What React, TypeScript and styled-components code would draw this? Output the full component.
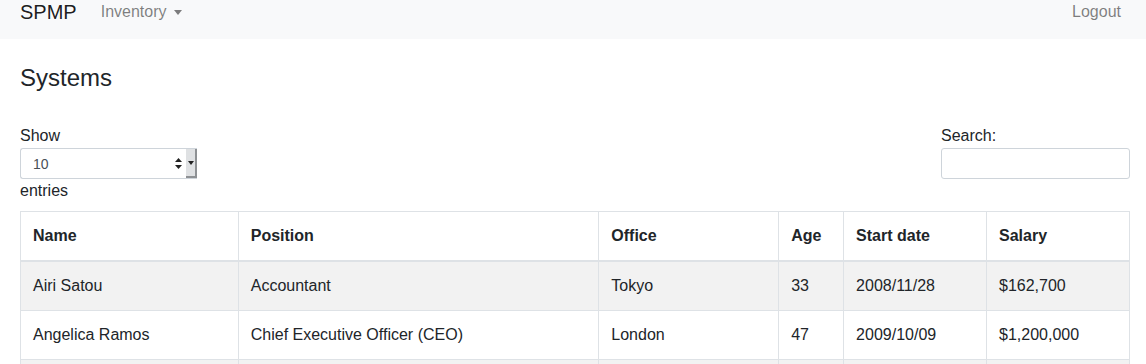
import styled, { createGlobalStyle } from "styled-components";

const GlobalStyle = createGlobalStyle`
  * { box-sizing: border-box; }
  body {
    margin: 0;
    font-family: "Liberation Sans", Arial, sans-serif;
    font-size: 16px;
    line-height: 24px;
    color: #212529;
    background: #fff;
  }
`;

const Navbar = styled.nav`
  height: 39px;
  background: #f8f9fa;
  display: flex;
  align-items: flex-start;
  padding: 0 25px 0 20px;
`;

const Brand = styled.div`
  font-size: 20px;
  line-height: 24px;
  color: rgba(0, 0, 0, 0.9);
  margin-right: 24px;
`;

const NavLink = styled.div<{ $right?: boolean }>`
  font-size: 16px;
  line-height: 24px;
  color: rgba(0, 0, 0, 0.5);
  display: flex;
  align-items: center;
  margin-left: ${(p) => (p.$right ? "auto" : "0")};
`;

const Caret = styled.span`
  display: inline-block;
  margin-left: 7px;
  margin-top: 1px;
  border-top: 5px solid rgba(0, 0, 0, 0.5);
  border-left: 4px solid transparent;
  border-right: 4px solid transparent;
`;

const Main = styled.main`
  padding: 0 16px 0 20px;
`;

const Title = styled.h4`
  margin: 24px 0 0;
  font-size: 24px;
  font-weight: 400;
  line-height: 29px;
`;

const Controls = styled.div`
  display: flex;
  justify-content: space-between;
  margin-top: 32px;
`;

const Field = styled.div`
  display: flex;
  flex-direction: column;
`;

const Label = styled.div`
  line-height: 24px;
`;

const SelectBox = styled.div`
  width: 177px;
  height: 31px;
  border: 1px solid #ced4da;
  border-right: none;
  border-radius: 3px 0 0 3px;
  display: flex;
  align-items: center;
  font-size: 14px;
  padding-left: 12px;
`;

const SelectValue = styled.span`
  flex: 1;
  color: #495057;
`;

const Spinner = styled.svg`
  margin-right: 4px;
`;

const DropButton = styled.div`
  width: 11px;
  align-self: stretch;
  background: #dfe1e3;
  border-right: 2px solid #8e9194;
  border-bottom: 2px solid #8e9194;
  display: flex;
  align-items: center;
  justify-content: center;
`;

const DropCaret = styled.span`
  border-top: 4px solid #222;
  border-left: 3px solid transparent;
  border-right: 3px solid transparent;
`;

const SearchInput = styled.div`
  width: 189px;
  height: 31px;
  border: 1px solid #ced4da;
  border-radius: 3px;
`;

const Table = styled.table`
  width: 1110px;
  margin-top: 8px;
  border-collapse: collapse;
  font-size: 16px;
`;

const Th = styled.th<{ $w: number }>`
  width: ${(p) => p.$w}px;
  text-align: left;
  font-weight: 700;
  padding: 12px;
  height: 49px;
  border: 1px solid #dee2e6;
  border-bottom: 2px solid #dee2e6;
`;

const Row = styled.tr<{ $striped?: boolean }>`
  background: ${(p) => (p.$striped ? "#f2f2f2" : "#fff")};
`;

const Td = styled.td`
  padding: 12px;
  height: 48px;
  border: 1px solid #dee2e6;
`;

const columns = [
  { name: "Name", w: 218 },
  { name: "Position", w: 361 },
  { name: "Office", w: 180 },
  { name: "Age", w: 65 },
  { name: "Start date", w: 143 },
  { name: "Salary", w: 143 },
];

const rows = [
  ["Airi Satou", "Accountant", "Tokyo", "33", "2008/11/28", "$162,700"],
  ["Angelica Ramos", "Chief Executive Officer (CEO)", "London", "47", "2009/10/09", "$1,200,000"],
  ["Ashton Cox", "Junior Technical Author", "San Francisco", "66", "2009/01/12", "$86,000"],
];

export default function App() {
  return (
    <>
      <GlobalStyle />
      <Navbar>
        <Brand>SPMP</Brand>
        <NavLink>
          Inventory
          <Caret />
        </NavLink>
        <NavLink $right>Logout</NavLink>
      </Navbar>
      <Main>
        <Title>Systems</Title>
        <Controls>
          <Field>
            <Label>Show</Label>
            <SelectBox>
              <SelectValue>10</SelectValue>
              <Spinner width="7" height="11" viewBox="0 0 7 11">
                <path d="M3.5 0 L7 4 L0 4 Z M0 7 L7 7 L3.5 11 Z" fill="#222" />
              </Spinner>
              <DropButton>
                <DropCaret />
              </DropButton>
            </SelectBox>
            <Label>entries</Label>
          </Field>
          <Field>
            <Label>Search:</Label>
            <SearchInput />
          </Field>
        </Controls>
        <Table>
          <thead>
            <tr>
              {columns.map((c) => (
                <Th key={c.name} $w={c.w}>
                  {c.name}
                </Th>
              ))}
            </tr>
          </thead>
          <tbody>
            {rows.map((r, i) => (
              <Row key={r[0]} $striped={i % 2 === 0}>
                {r.map((cell, j) => (
                  <Td key={j}>{cell}</Td>
                ))}
              </Row>
            ))}
          </tbody>
        </Table>
      </Main>
    </>
  );
}
